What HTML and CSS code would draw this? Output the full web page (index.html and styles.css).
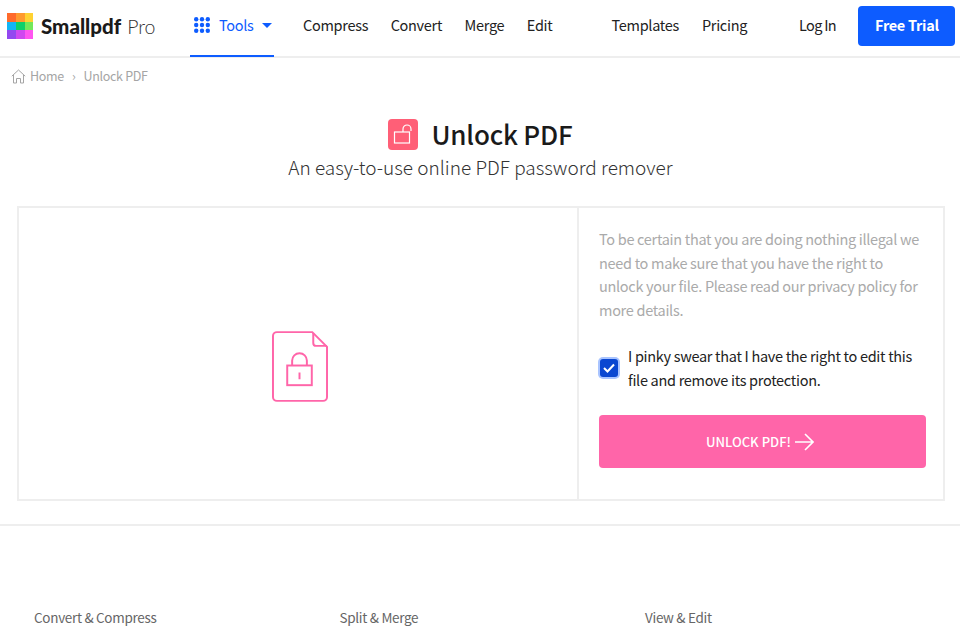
FILE: index.html
```html
<!DOCTYPE html>
<html lang="en">
<head>
    <meta charset="UTF-8">
    <meta name="viewport" content="width=device-width, initial-scale=1.0">
    <title>Unlock PDF</title>
    <link rel="stylesheet" href="styles.css">
</head>
<body>
    <header class="topbar">
        <a class="brand" href="#">
            <svg class="brand-mark" width="26" height="26" viewBox="0 0 26 26">
                <rect x="0" y="0" width="9" height="9" fill="#ff6a2b"/>
                <rect x="9" y="0" width="9" height="9" fill="#ff9a2e"/>
                <rect x="18" y="0" width="8" height="9" fill="#ffd232"/>
                <rect x="0" y="9" width="9" height="8" fill="#12b5f5"/>
                <rect x="9" y="9" width="9" height="8" fill="#0fd06a"/>
                <rect x="18" y="9" width="8" height="8" fill="#74e85a"/>
                <rect x="0" y="17" width="9" height="9" fill="#9348f0"/>
                <rect x="9" y="17" width="9" height="9" fill="#cf48f0"/>
                <rect x="18" y="17" width="8" height="9" fill="#ff55f0"/>
            </svg>
            <span class="brand-name">Smallpdf</span>
            <span class="brand-plan">Pro</span>
        </a>
        <a class="tools-tab" href="#">
            <svg width="16" height="16" viewBox="0 0 16 16" fill="#0d5cff">
                <circle cx="2.2" cy="2.2" r="2.2"/><circle cx="8" cy="2.2" r="2.2"/><circle cx="13.8" cy="2.2" r="2.2"/>
                <circle cx="2.2" cy="8" r="2.2"/><circle cx="8" cy="8" r="2.2"/><circle cx="13.8" cy="8" r="2.2"/>
                <circle cx="2.2" cy="13.8" r="2.2"/><circle cx="8" cy="13.8" r="2.2"/><circle cx="13.8" cy="13.8" r="2.2"/>
            </svg>
            <span>Tools</span>
            <svg width="10" height="5" viewBox="0 0 10 5" fill="#0d5cff"><path d="M0 0h10L5 5z"/></svg>
        </a>
        <nav class="nav-main">
            <a href="#">Compress</a>
            <a href="#">Convert</a>
            <a href="#">Merge</a>
            <a href="#">Edit</a>
        </nav>
        <nav class="nav-extra">
            <a href="#">Templates</a>
            <a href="#">Pricing</a>
        </nav>
        <a class="login" href="#">Log In</a>
        <a class="trial" href="#">Free Trial</a>
    </header>

    <div class="crumbs">
        <svg width="15" height="15" viewBox="0 0 15 15" fill="none" stroke="#a5a5a5" stroke-width="1">
            <path d="M.8 7.2 7.5 1l6.7 6.2M2.5 6v8h3V9.5h4V14h3V6"/>
        </svg>
        <a href="#">Home</a>
        <span class="crumb-sep">›</span>
        <span>Unlock PDF</span>
    </div>

    <section class="intro">
        <div class="title-row">
            <span class="title-icon">
                <svg width="22" height="20" viewBox="0 0 22 20" fill="none" stroke="#fff" stroke-width="1.2">
                    <rect x="2.5" y="8" width="15" height="11"/>
                    <path d="M11 8V5a4 4 0 0 1 8 0v2"/>
                </svg>
            </span>
            <h1>Unlock PDF</h1>
        </div>
        <p class="subtitle">An easy-to-use online PDF password remover</p>
    </section>

    <main class="panel">
        <div class="panel-file">
            <svg width="56" height="71" viewBox="0 0 57 72" fill="none" stroke="#ff65a9" stroke-width="2">
                <path d="M5 1h36l15 15v51a4 4 0 0 1-4 4H5a4 4 0 0 1-4-4V5a4 4 0 0 1 4-4z"/>
                <path d="M42 2v10a3 3 0 0 0 3 3h11"/>
                <rect x="15.5" y="35" width="25" height="20"/>
                <path d="M20.5 35v-5a7.5 7.5 0 0 1 15 0v5M28 42v7"/>
            </svg>
        </div>
        <div class="panel-form">
            <p class="notice">To be certain that you are doing nothing illegal we need to make sure that you have the right to unlock your file. Please read our privacy policy for more details.</p>
            <label class="swear">
                <span class="check">
                    <svg width="12" height="10" viewBox="0 0 12 10" fill="none" stroke="#fff" stroke-width="2"><path d="M1 5l3.5 3.5L11 1.5"/></svg>
                </span>
                <span>I pinky swear that I have the right to edit this file and remove its protection.</span>
            </label>
            <button class="unlock" type="button">
                UNLOCK PDF!
                <svg width="19" height="18" viewBox="0 0 19 18" fill="none" stroke="#fff" stroke-width="1.6"><path d="M0 9h18M10 1l8 8-8 8"/></svg>
            </button>
        </div>
    </main>

    <footer class="foot">
        <h4>Convert &amp; Compress</h4>
        <h4>Split &amp; Merge</h4>
        <h4>View &amp; Edit</h4>
    </footer>
</body>
</html>
```

FILE: styles.css
```css
* {
    margin: 0;
    padding: 0;
    box-sizing: border-box;
}

html, body {
    height: 640px;
    overflow: hidden;
}

body {
    font-family: "Noto Sans CJK JP", "Noto Sans", sans-serif;
    background-color: white;
    color: #222;
    font-size: 14.5px;
    letter-spacing: -0.3px;
}

a {
    color: inherit;
    text-decoration: none;
}

.topbar {
    display: flex;
    align-items: center;
    height: 58px;
    border-bottom: 2px solid #eee;
    padding: 0 0 4px 7px;
}

.topbar > * {
    flex: none;
}

.brand {
    display: flex;
    align-items: center;
    width: 183px;
    letter-spacing: 0;
}

.brand-mark {
    margin-right: 8px;
}

.brand-name {
    font-family: Lato, sans-serif;
    font-weight: 900;
    font-size: 20.5px;
    color: #1a1a1a;
}

.brand-plan {
    font-family: Lato, sans-serif;
    font-weight: 300;
    font-size: 19.5px;
    color: #333;
    margin-left: 6px;
}

.tools-tab {
    display: flex;
    align-items: center;
    align-self: stretch;
    width: 84px;
    padding: 0 0 5px 4px;
    margin-bottom: -5px;
    border-bottom: 2px solid #0d5cff;
    color: #0d5cff;
}

.tools-tab span {
    margin: 0 9px;
    width: 34px;
    line-height: 20px;
}

.nav-main, .nav-extra {
    display: flex;
    line-height: 20px;
    padding-bottom: 2px;
}

.nav-main {
    margin-left: 29px;
    gap: 22.5px;
}

.nav-extra {
    margin-left: 59px;
    gap: 23px;
}

.login {
    margin-left: 52px;
    line-height: 20px;
    padding-bottom: 2px;
    letter-spacing: -0.7px;
}

.trial {
    margin-left: 22.5px;
    width: 97px;
    height: 40px;
    line-height: 38px;
    text-align: center;
    background-color: #0d5cff;
    color: white;
    font-weight: 700;
    border-radius: 4px;
}

.crumbs {
    display: flex;
    align-items: center;
    padding-left: 11px;
    height: 36px;
    color: #a5a5a5;
    font-size: 12.5px;
    line-height: 18px;
}

.crumbs a {
    margin-left: 4px;
}

.crumb-sep {
    margin: 0 8px;
}

.intro {
    text-align: center;
    padding: 22px 0 0 1px;
}

.title-row {
    display: flex;
    justify-content: center;
    align-items: center;
    gap: 13px;
    margin-bottom: 1px;
}

.title-icon {
    display: flex;
    align-items: center;
    justify-content: center;
    width: 30px;
    height: 31px;
    background-color: #ff5f77;
    border-radius: 4px;
}

h1 {
    font-size: 26px;
    font-weight: 500;
    line-height: 36px;
    letter-spacing: -0.2px;
    color: #1a1a1a;
}

.subtitle {
    font-size: 19px;
    font-weight: 300;
    line-height: 28px;
    letter-spacing: 0;
    color: #333;
}

.panel {
    display: flex;
    margin: 25px 15px 0 17px;
    height: 295px;
    border: 2px solid #eee;
}

.panel-file {
    width: 560px;
    border-right: 2px solid #eee;
    display: flex;
    align-items: center;
    justify-content: center;
    padding: 26px 0 0 3px;
}

.panel-form {
    flex: 1;
    padding: 19px 17px 0 20px;
}

.notice {
    color: #aaa;
    line-height: 23.5px;
}

.swear {
    display: flex;
    align-items: center;
    gap: 10px;
    margin: 23px 0 0 1px;
    line-height: 23.5px;
    color: #222;
}

.check {
    flex: none;
    display: flex;
    align-items: center;
    justify-content: center;
    width: 18px;
    height: 18px;
    background-color: #0a47d1;
    border-radius: 3px;
    box-shadow: 0 0 0 2px #a9c4ff;
}

.unlock {
    display: flex;
    align-items: center;
    justify-content: center;
    gap: 4px;
    width: 100%;
    height: 53px;
    margin-top: 24px;
    padding-right: 5px;
    background-color: #ff65a9;
    color: white;
    border: none;
    border-radius: 4px;
    font-family: inherit;
    font-size: 13px;
    font-weight: 500;
    letter-spacing: 0;
}

.foot {
    margin-top: 23px;
    border-top: 2px solid #eee;
    padding: 81px 0 0 34px;
    display: flex;
}

.foot h4 {
    width: 305.5px;
    font-size: 13.5px;
    font-weight: 400;
    line-height: 20px;
    letter-spacing: -0.3px;
    color: #666;
}
```
